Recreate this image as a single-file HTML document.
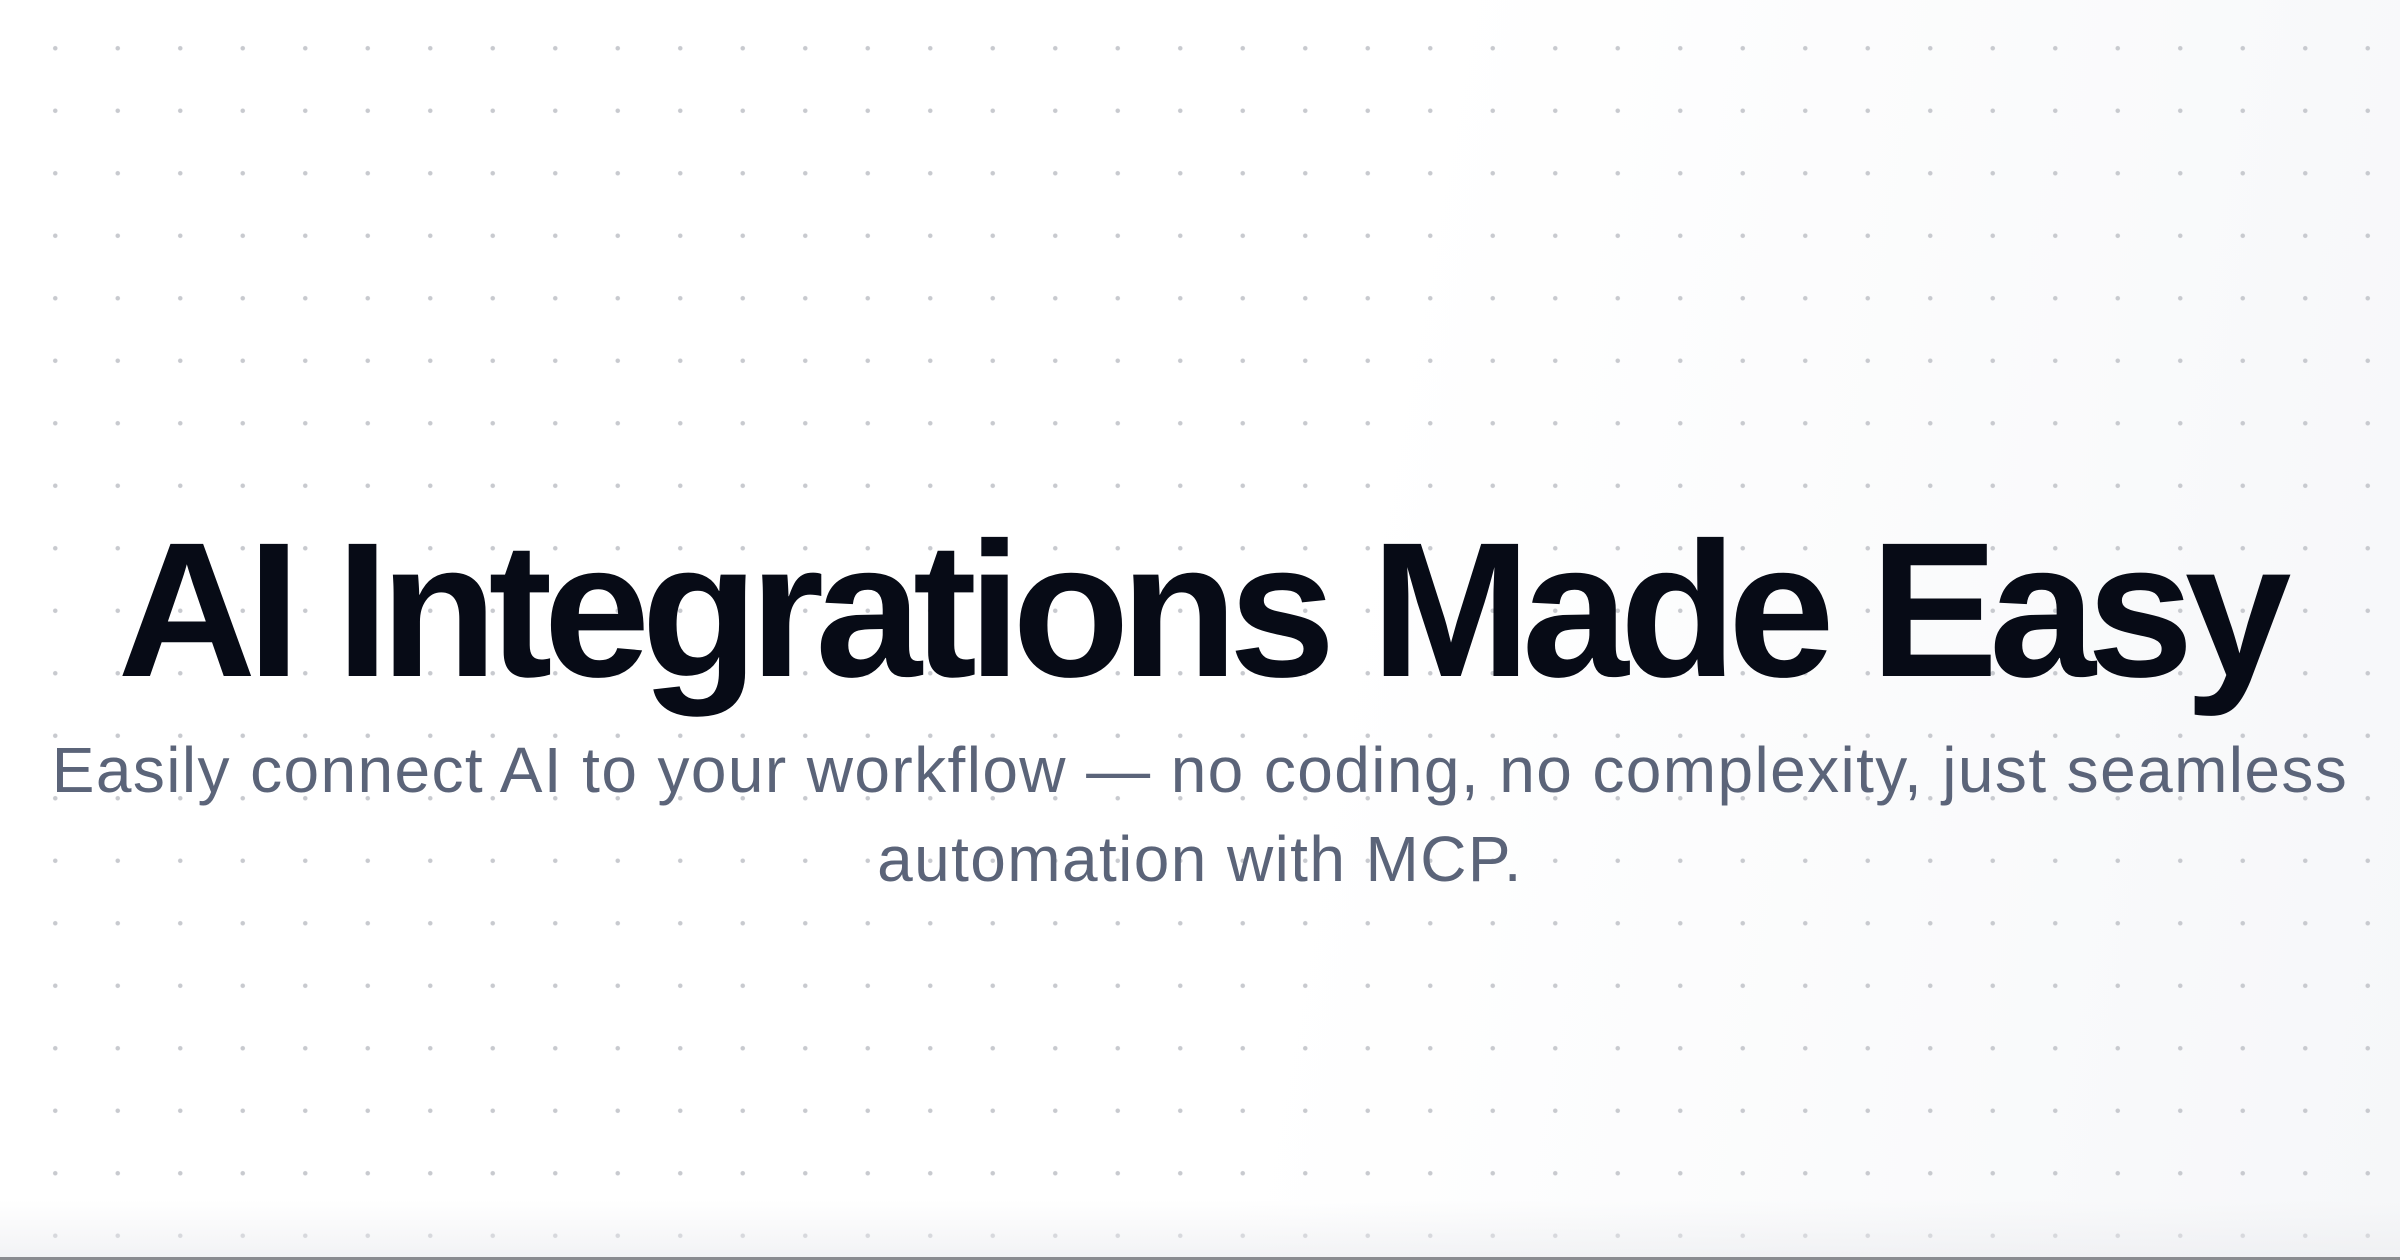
<!DOCTYPE html>
<html><head><meta charset="utf-8"><style>
html,body{margin:0;padding:0;width:2400px;height:1260px;overflow:hidden}
body{position:relative;font-family:"Liberation Sans",sans-serif;
background:linear-gradient(100deg,#ffffff 0%,#ffffff 55%,#f6f7f9 100%);}
.dots{position:absolute;inset:0;
background-image:radial-gradient(circle,#c8cacf 1.9px,transparent 2.6px);
background-size:62.5px 62.5px;background-position:24px 17px;}
.fade{position:absolute;left:0;right:0;bottom:0;height:60px;background:linear-gradient(180deg,rgba(240,241,243,0),rgba(236,237,240,0.7))}
.line{position:absolute;left:0;right:0;bottom:0;height:3px;background:#8a8c90}
h1{position:absolute;left:0;width:2400px;top:500px;margin:0;text-align:center;
font-size:192px;font-weight:700;color:#070b16;letter-spacing:-9px;line-height:220px;white-space:nowrap}
p{position:absolute;left:20px;width:2360px;top:726px;margin:0;text-align:center;
font-size:64px;line-height:89px;color:#5b6479;letter-spacing:1.4px}
</style></head><body>
<div class="dots"></div>
<div class="fade"></div>
<div class="line"></div>
<h1>AI Integrations Made Easy</h1>
<p>Easily connect AI to your workflow — no coding, no complexity, just seamless automation with MCP.</p>
</body></html>
